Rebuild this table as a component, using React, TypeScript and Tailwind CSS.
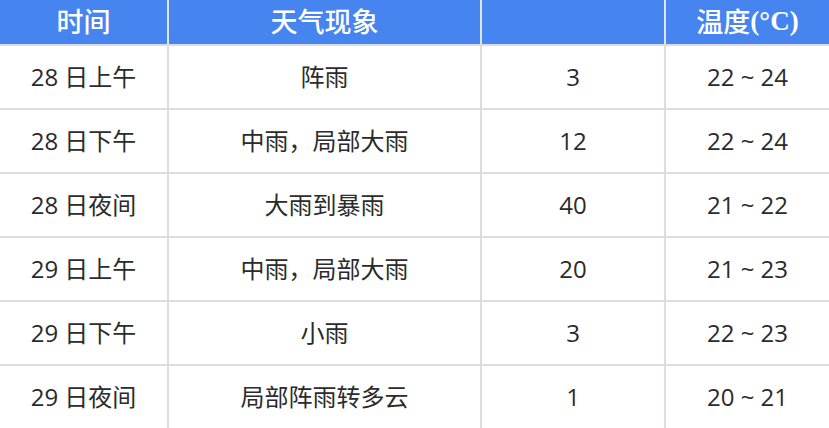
import React from "react";

const rows = [
  ["28 日上午", "阵雨", "3", "22 ~ 24"],
  ["28 日下午", "中雨，局部大雨", "12", "22 ~ 24"],
  ["28 日夜间", "大雨到暴雨", "40", "21 ~ 22"],
  ["29 日上午", "中雨，局部大雨", "20", "21 ~ 23"],
  ["29 日下午", "小雨", "3", "22 ~ 23"],
  ["29 日夜间", "局部阵雨转多云", "1", "20 ~ 21"],
];

const head = "h-[44px] bg-[#4685ef] flex items-center justify-center text-white text-[27px] font-medium pb-[2px]";

export default function App() {
  return (
    <div className="w-[829px] h-[428px] bg-white overflow-hidden">
      <div className="grid grid-cols-[167px_2px_311px_2px_182px_2px_163px_2px]">
        <div className={`${head} [font-family:'Noto_Sans_CJK_SC',sans-serif]`}>时间</div>
        <div className="bg-[#dfe5f3]" />
        <div className={`${head} [font-family:'Noto_Sans_CJK_SC',sans-serif]`}>天气现象</div>
        <div className="bg-[#dfe5f3]" />
        <div className="h-[44px] bg-[#4685ef]" />
        <div className="bg-[#dfe5f3]" />
        <div className={`${head} [font-family:'Noto_Sans_CJK_SC',sans-serif]`}>
          温度<span className="font-bold [font-family:'Liberation_Serif',serif]">(°C)</span>
        </div>
        <div className="bg-[#dfe5f3]" />
      </div>
      {rows.map((r, i) => (
        <div key={i} className="grid grid-cols-[167px_2px_311px_2px_182px_2px_163px_2px] border-t-2 border-[#dcdce6]">
          {r.map((c, j) => (
            <React.Fragment key={j}>
              <div className="h-[62px] flex items-center justify-center text-[24px] text-[#2b2b2b] [font-family:'Open_Sans','Noto_Sans_CJK_SC',sans-serif]">
                {c}
              </div>
              <div className="bg-[#dcdce6]" />
            </React.Fragment>
          ))}
        </div>
      ))}
    </div>
  );
}
